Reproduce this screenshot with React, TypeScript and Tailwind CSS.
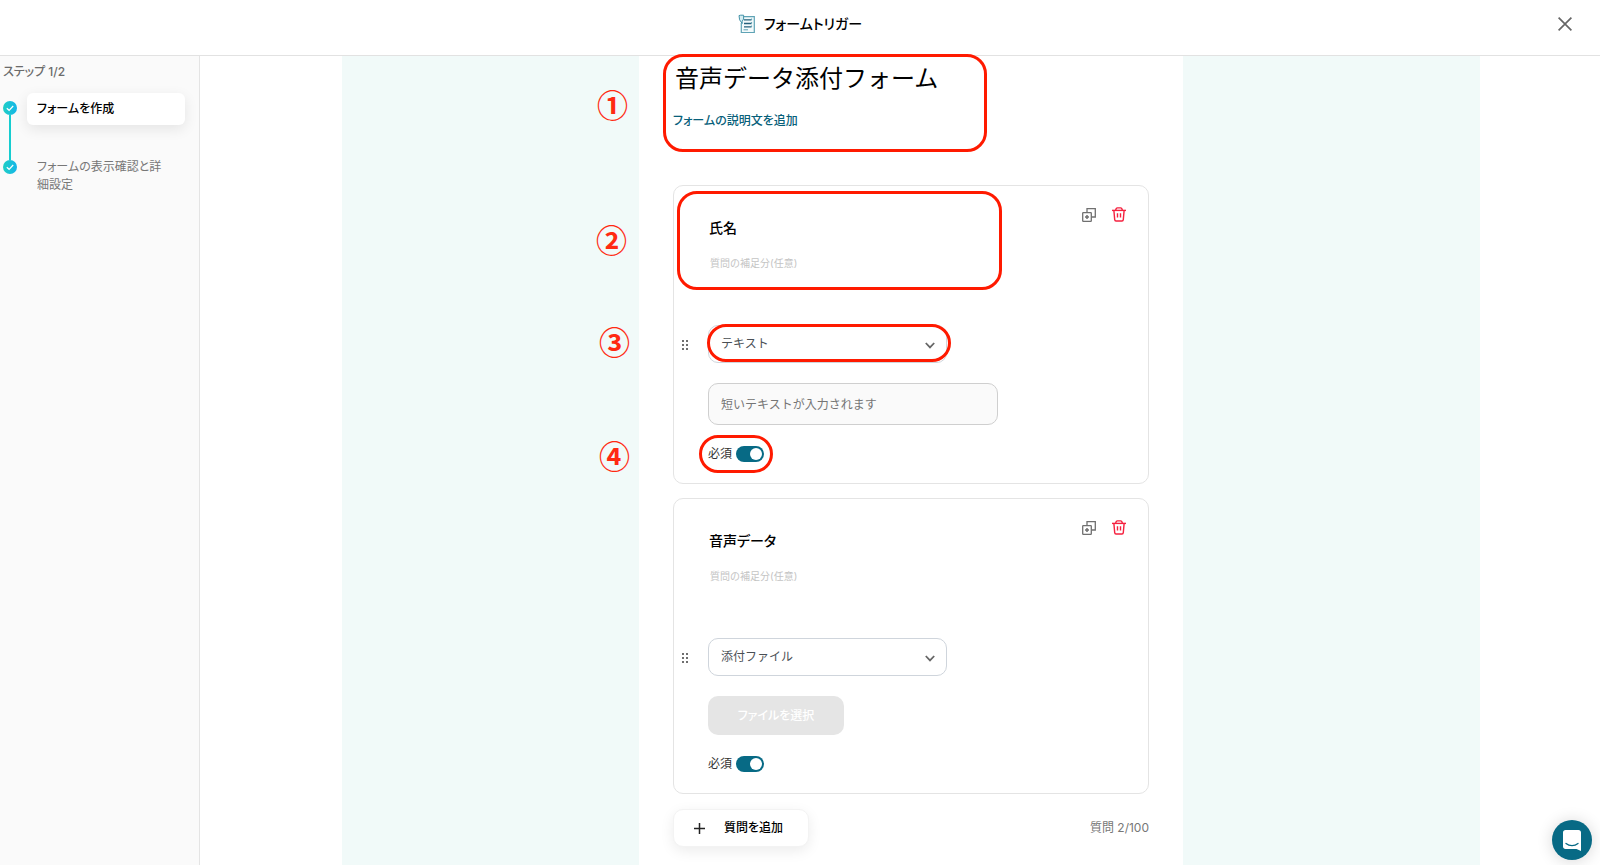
import { ReactNode, useState } from "react";

interface IQuestion {
    id: string
    title: string
    type: string
}

const QUESTION_TYPES = ["テキスト", "添付ファイル"];

function FormIcon() {
    return (
        <svg width="18" height="20" viewBox="0 0 18 20" fill="none" className="shrink-0">
            <path d="M6 2.6H16.3V18.5H3.3V9" fill="#f3fafb" stroke="#5fa3b5" strokeWidth="1.2" />
            <path d="M1 1.6L2.6 1.2H5.6V5L4.2 7.2V9.5L1.6 5.8Z" fill="#d5edf2" stroke="#4392a8" strokeWidth="1" />
            <path d="M6 5.8H13.5M6 9.5H13.5M6 12.8H13.5" stroke="#24627d" strokeWidth="1.3" />
            <path d="M13.6 4.5V6M13.6 8V9.6M13.6 11.5V13" stroke="#5fa3b5" strokeWidth="1" />
            <path d="M5.5 15.8H10" stroke="#5fa3b5" strokeWidth="1" />
        </svg>
    )
}

function CopyIcon() {
    return (
        <svg width="14" height="14" viewBox="0 0 14 14" fill="none" stroke="#707070" strokeWidth="1.3">
            <rect x="0.7" y="4.7" width="8.6" height="8.6" rx="0.6" />
            <path d="M5 4.5V0.7H13.3V9H9.5" />
            <path d="M5 7V11M3 9H7" strokeWidth="1.5" />
        </svg>
    )
}

function TrashIcon() {
    return (
        <svg width="14" height="15" viewBox="0 0 14 15" fill="none" stroke="#f5213f" strokeWidth="1.4">
            <path d="M0 3.4H14" />
            <path d="M3.7 3.2C3.9 1.5 4.6.9 5.4.9H8.6C9.4.9 10.1 1.5 10.3 3.2" />
            <path d="M1.9 3.6L2.7 12.6C2.8 13.6 3.2 14 4 14H10C10.8 14 11.2 13.6 11.3 12.6L12.1 3.6" />
            <path d="M5.5 6.2V10.6M8.5 6.2V10.6" />
        </svg>
    )
}

function StepCheck() {
    return (
        <svg width="14" height="14" viewBox="0 0 14 14" fill="none" className="shrink-0">
            <defs>
                <linearGradient id="step" x1="0" y1="0" x2="1" y2="0">
                    <stop offset="0" stopColor="#1fcfc4" />
                    <stop offset="1" stopColor="#14b5ea" />
                </linearGradient>
            </defs>
            <circle cx="7" cy="7" r="7" fill="url(#step)" />
            <path d="M3.8 7.2L6.1 9.3L10.2 5" stroke="#fff" strokeWidth="1.2" />
        </svg>
    )
}

function Marker({ className, children }: { className: string, children: ReactNode }) {
    return <span className={`pointer-events-none absolute font-['Noto_Sans_CJK_JP',sans-serif] text-[31px] leading-8 font-bold text-[#ff2a12] ${className}`}>{children}</span>
}

function Outline({ className }: { className: string }) {
    return <div className={`pointer-events-none absolute border-3 border-[#ff1a00] ${className}`} />
}

function RequiredSwitch({ id }: { id: string }) {
    const [required, setRequired] = useState(true);

    return (
        <div className="mt-[21px] flex h-4 items-center gap-1">
            <label htmlFor={id} className="text-xs text-[#333]">必須</label>
            <input
                id={id}
                type="checkbox"
                role="switch"
                checked={required}
                onChange={() => setRequired(!required)}
                className="h-4 w-7 cursor-pointer appearance-none rounded-full bg-gray-300 p-0.5 before:block before:size-3 before:rounded-full before:bg-white checked:bg-[#076a85] checked:before:ml-3"
            />
        </div>
    )
}

interface QuestionCardProps {
    question: IQuestion
    children: ReactNode
    annotations?: ReactNode
}

function QuestionCard({ question, children, annotations }: QuestionCardProps) {
    return (
        <section className="relative flex rounded-[10px] border border-[#e4e4e4] bg-white pb-[21px]">
            <button aria-label="並び替え" className="mt-[153px] ml-2 h-3 w-[26px] shrink-0 cursor-grab">
                <svg width="6" height="12" viewBox="0 0 6 12" fill="#6f6f6f">
                    <path d="M0 1h2v2H0zM4 1h2v2H4zM0 5h2v2H0zM4 5h2v2H4zM0 9h2v2H0zM4 9h2v2H4z" />
                </svg>
            </button>
            <div className="flex min-w-0 flex-1 flex-col items-start pt-[27px]">
                <input aria-label="質問" defaultValue={question.title} className="h-7 w-[280px] px-px text-sm font-medium text-black outline-none" />
                <input aria-label="質問の補足" placeholder="質問の補足分(任意)" className="mt-3 h-5 w-[280px] px-0.5 text-[10px] outline-none placeholder:text-[#c4c4c4] [font-feature-settings:normal]" />
                <div className="relative mt-[52px] w-[239px]">
                    <select aria-label="回答形式" defaultValue={question.type} className="h-[38px] w-full appearance-none rounded-[10px] border border-[#cfd5dc] bg-white px-3 text-xs text-[#4a4f55] [font-feature-settings:normal]">
                        {QUESTION_TYPES.map((type) => <option key={type}>{type}</option>)}
                    </select>
                    <svg width="10" height="7" viewBox="0 0 10 7" fill="none" stroke="#666" strokeWidth="1.8" className="pointer-events-none absolute top-[17px] right-3">
                        <path d="M.8 1L5 5.4L9.2 1" />
                    </svg>
                </div>
                {children}
                <RequiredSwitch id={`required-${question.id}`} />
            </div>
            <div className="mt-[21px] mr-[22px] flex shrink-0 items-center gap-4 self-start">
                <button aria-label="複製"><CopyIcon /></button>
                <button aria-label="削除"><TrashIcon /></button>
            </div>
            {annotations}
        </section>
    )
}

function Sidebar() {
    return (
        <aside className="w-[200px] shrink-0 border-r border-[#e4e4e4] bg-[#fafafa] px-[3px] pt-2">
            <p className="text-xs font-medium text-[#6b6b6b]">ステップ 1/2</p>
            <ol className="mt-[13px]">
                <li className="flex gap-[10px]">
                    <div className="flex flex-col items-center pt-2">
                        <StepCheck />
                        <div className="w-0.5 flex-1 bg-[#16cdd0]" />
                    </div>
                    <div className="mb-[35px] flex-1 pr-[11px]">
                        <a href="#create" className="flex h-8 items-center rounded-md bg-white px-[10px] text-xs font-medium text-black shadow-[0_4px_14px_rgba(0,0,0,0.09)]">フォームを作成</a>
                    </div>
                </li>
                <li className="flex gap-[10px]">
                    <div className="flex flex-col items-center">
                        <StepCheck />
                    </div>
                    <a href="#settings" className="-mt-0.5 pr-6 pl-[10px] text-xs leading-[18px] text-[#777]">フォームの表示確認と詳細設定</a>
                </li>
            </ol>
        </aside>
    )
}

export default function App() {
    return (
        <div className="flex min-h-screen flex-col bg-white font-[Inter,'Noto_Sans_CJK_JP',sans-serif] [font-feature-settings:'palt']">
            <header className="relative flex h-14 shrink-0 items-center justify-center gap-2 border-b border-[#e2e2e2] pb-2">
                <FormIcon />
                <h1 className="text-sm font-medium text-black">フォームトリガー</h1>
                <button aria-label="閉じる" className="absolute top-[17px] right-7">
                    <svg width="14" height="14" viewBox="0 0 14 14" stroke="#666" strokeWidth="1.7">
                        <path d="M.6 .6L13.4 13.4M13.4 .6L.6 13.4" />
                    </svg>
                </button>
            </header>

            <div className="flex flex-1">
                <Sidebar />
                <main className="flex flex-1 pr-[120px] pl-[142px]">
                    <div className="flex flex-1 justify-center bg-[#f1faf9]">
                        <div className="w-[544px] bg-white px-[34px] pb-4">
                            <div className="relative">
                                <input aria-label="フォーム名" defaultValue="音声データ添付フォーム" className="h-10 w-full px-0.5 text-2xl text-black outline-none [font-feature-settings:normal]" />
                                <button className="mt-[17px] block h-4 text-xs leading-4 font-medium text-[#07607a]">フォームの説明文を追加</button>
                                <Marker className="top-8 -left-[76px]">①</Marker>
                                <Outline className="-top-0.5 -left-[10px] h-[98px] w-[324px] rounded-[20px]" />
                            </div>

                            <div className="mt-14 flex flex-col gap-[14px]">
                                <QuestionCard
                                    question={{ id: "name", title: "氏名", type: "テキスト" }}
                                    annotations={
                                        <>
                                            <Marker className="top-[37px] -left-[78px]">②</Marker>
                                            <Outline className="top-[5px] left-[3px] h-[99px] w-[325px] rounded-[20px]" />
                                            <Marker className="top-[139px] -left-[75px]">③</Marker>
                                            <Outline className="top-[138px] left-[33px] h-[38px] w-[244px] rounded-full" />
                                            <Marker className="top-[253px] -left-[75px]">④</Marker>
                                            <Outline className="top-[249px] left-[25px] h-[38px] w-[74px] rounded-full" />
                                        </>
                                    }
                                >
                                    <input aria-label="回答欄" disabled placeholder="短いテキストが入力されます" className="mt-5 h-[42px] w-[290px] rounded-[10px] border border-[#cfcfcf] bg-[#fafafa] px-3 text-xs placeholder:text-[#757575] [font-feature-settings:normal]" />
                                </QuestionCard>
                                <QuestionCard question={{ id: "voice", title: "音声データ", type: "添付ファイル" }}>
                                    <button disabled className="mt-5 h-[39px] w-[136px] rounded-[10px] bg-[#e5e5e5] text-xs font-medium text-white">ファイルを選択</button>
                                </QuestionCard>
                            </div>

                            <div className="mt-[15px] flex items-center justify-between">
                                <button className="flex h-[38px] w-[136px] items-center gap-[19px] rounded-[10px] border border-[#f3f3f3] bg-white pl-5 text-xs font-medium text-black shadow-[0_4px_14px_rgba(0,0,0,0.08)]">
                                    <svg width="11" height="11" viewBox="0 0 11 11" stroke="#222" strokeWidth="1.5">
                                        <path d="M5.5 0V11M0 5.5H11" />
                                    </svg>
                                    質問を追加
                                </button>
                                <p className="text-xs text-[#777]">質問 2/100</p>
                            </div>
                        </div>
                    </div>
                </main>
            </div>

            <button aria-label="チャット" className="fixed right-2 bottom-[5px] flex size-10 items-center justify-center rounded-full bg-[#076a85] shadow-[0_1px_16px_rgba(0,0,0,0.16)]">
                <svg width="18" height="21" viewBox="0 0 18 21" fill="none">
                    <path d="M2.5 0H15.5C17 0 18 1 18 2.5V21L13.5 19H2.5C1 19 0 18 0 16.5V2.5C0 1 1 0 2.5 0Z" fill="#fff" />
                    <path d="M3 13.5C6.5 16.3 11.5 16.3 15 13.5" stroke="#076a85" strokeWidth="1.3" strokeLinecap="round" />
                </svg>
            </button>
        </div>
    )
}
